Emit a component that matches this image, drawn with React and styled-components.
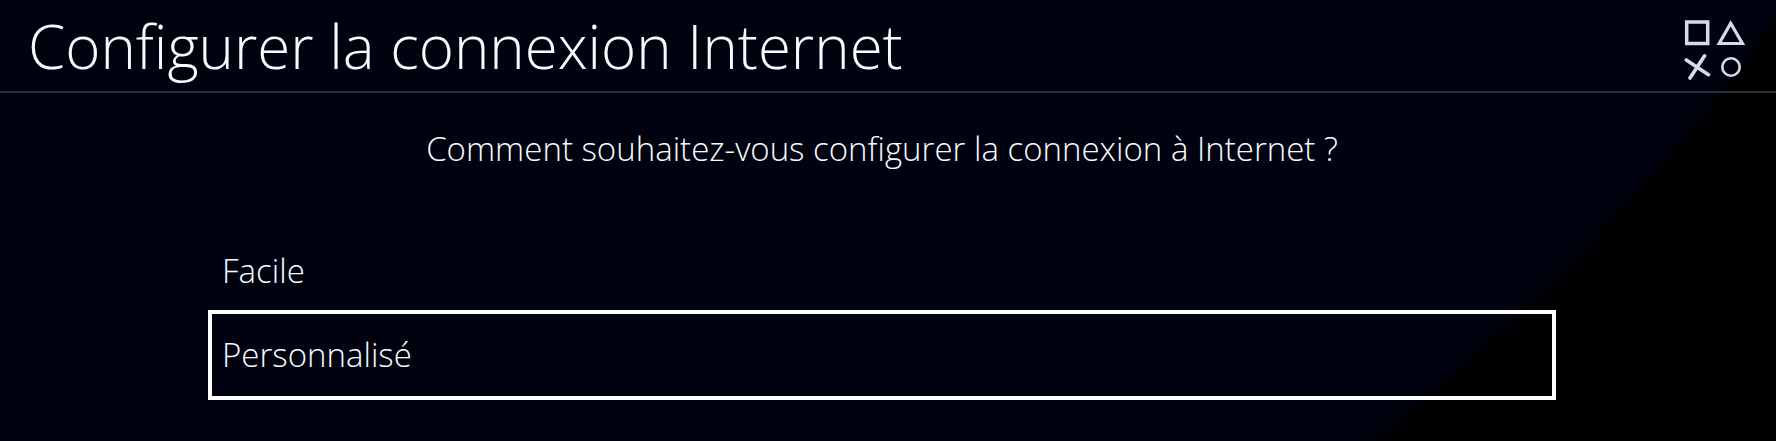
import React, { useState } from "react";
import styled, { createGlobalStyle } from "styled-components";

const GlobalStyle = createGlobalStyle`
  * {
    box-sizing: border-box;
  }
  html {
    min-height: 100%;
    background: #000;
  }
  body {
    margin: 0;
    font-family: "Open Sans", "Noto Sans", sans-serif;
    font-weight: 300;
    color: #f8faff;
  }
`;

const Screen = styled.div`
  min-height: 100vh;
  /* large soft circle, dark corner on the bottom right */
  background: radial-gradient(
    circle 2400px at right 1776px top -1273px,
    #00020f 0,
    #00020f 2188px,
    #000 2204px
  );
`;

const Header = styled.header`
  display: flex;
  align-items: center;
  justify-content: space-between;
  height: 93px;
  padding: 0 30px 0 28px;
  border-bottom: 2px solid #293039;
`;

const Title = styled.h1`
  margin: 0;
  font-size: 60px;
  line-height: 80px;
  font-weight: 300;
  white-space: nowrap;
`;

const Shapes = styled.svg`
  flex: none;
  width: 62px;
  height: 62px;
  margin-top: 6px;
  fill: none;
  stroke: #d9d9ee;
`;

const Content = styled.main`
  padding: 34px 223px 44px 211px;
`;

const Question = styled.p`
  margin: 0 0 58px;
  font-size: 33px;
  line-height: 44px;
  text-align: center;
  white-space: nowrap;
`;

const Options = styled.div`
  display: flex;
  flex-direction: column;
`;

const Option = styled.button`
  height: 84px;
  padding: 0 11px;
  border: 0;
  background: none;
  color: inherit;
  font: inherit;
  font-size: 33px;
  line-height: 44px;
  text-align: left;
  cursor: pointer;
  outline: ${(props) => (props.$selected ? "4px solid #fff" : "none")};
  outline-offset: -1px;
`;

const options = ["Facile", "Personnalisé"];

const App = () => {
  const [selected, setSelected] = useState(1);

  return (
    <Screen>
      <GlobalStyle />
      <Header>
        <Title>Configurer la connexion Internet</Title>
        <Shapes viewBox="0 0 62 62" aria-hidden="true">
          <rect x="2.7" y="4" width="21" height="21.5" strokeWidth="3.5" />
          <path d="M46.7 5.2L58.4 25.5H35.2Z" strokeWidth="3.2" />
          <path d="M2.3 42L24.5 56.7M20.6 37.8L6 60" strokeWidth="3.6" strokeLinecap="round" />
          <circle cx="47" cy="49" r="8.7" strokeWidth="2.6" />
        </Shapes>
      </Header>
      <Content>
        <Question>Comment souhaitez-vous configurer la connexion à Internet ?</Question>
        <Options>
          {options.map((name, i) => (
            <Option
              key={name}
              type="button"
              $selected={i === selected}
              aria-pressed={i === selected}
              onClick={() => setSelected(i)}
            >
              {name}
            </Option>
          ))}
        </Options>
      </Content>
    </Screen>
  );
};

export default App;
